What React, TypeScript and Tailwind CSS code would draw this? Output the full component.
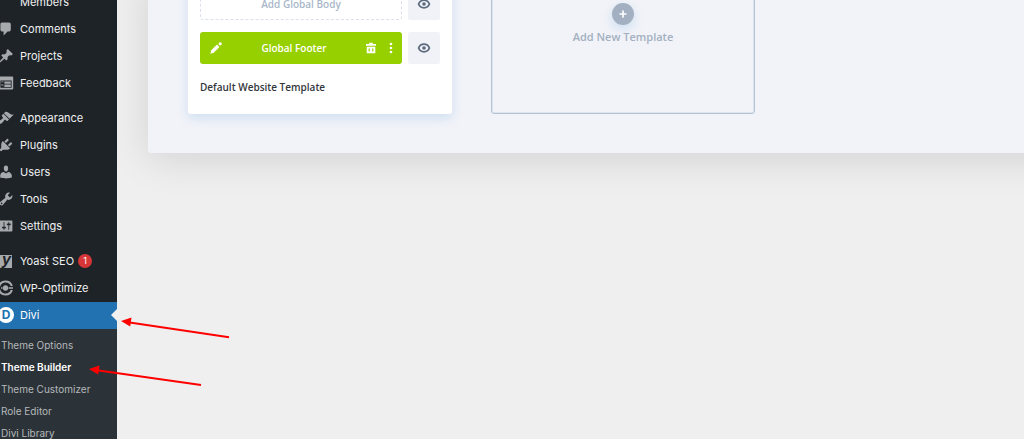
import type { ReactNode } from "react";
import { Plus } from "lucide-react";

type MenuItem = {
  label: string;
  icon?: ReactNode;
  badge?: number;
  active?: boolean;
};

function Dashicon({ d }: { d: string }) {
  return (
    <svg viewBox="0 0 20 20" className="size-4" fill="currentColor" aria-hidden="true">
      <path d={d} />
    </svg>
  );
}

function YoastIcon() {
  return (
    <svg viewBox="0 0 16 16" className="size-4 overflow-visible" aria-hidden="true">
      <path d="M1 2h13v13H1z" fill="currentColor" />
      <text x="4" y="11.5" fontSize="16" fontWeight="700" fontStyle="italic" fontFamily="Liberation Sans, sans-serif" fill="#1d2327">
        y
      </text>
    </svg>
  );
}

function OptimizeIcon() {
  return (
    <svg viewBox="0 0 16 16" className="size-4 overflow-visible" fill="none" stroke="currentColor" strokeWidth="2.2" aria-hidden="true">
      <path d="M1.2 6.3A6.600 6.600 0 0 1 13.800 6M13.800 10A6.600 6.600 0 0 1 1.200 9.700" />
      <path d="M3 8h1.500M10.500 8h4.500" strokeWidth="1.4" />
      <circle cx="7.500" cy="8" r="2.7" fill="currentColor" stroke="none" />
    </svg>
  );
}

function DiviIcon() {
  return (
    <span className="flex size-4 items-center justify-center rounded-full bg-white text-xs font-bold leading-4 text-[#2271b1]">
      D
    </span>
  );
}

const groups: MenuItem[][] = [
  [
    { label: "Members" },
    {
      label: "Comments",
      icon: <Dashicon d="M5 2h9c1.1 0 2 .9 2 2v7c0 1.1-.9 2-2 2h-2l-5 5v-5H5c-1.1 0-2-.9-2-2V4c0-1.1.9-2 2-2z" />,
    },
    {
      label: "Projects",
      icon: <Dashicon d="M10.44 3.02l1.82-1.82 6.36 6.35-1.83 1.82c-1.05-.68-2.48-.57-3.41.36l-.75.75c-.92.93-1.04 2.35-.35 3.41l-1.83 1.82-2.41-2.41-2.8 2.79c-.42.42-3.38 2.71-3.8 2.29s1.86-3.39 2.28-3.81l2.79-2.79L4.1 9.36l1.83-1.82c1.05.69 2.48.57 3.4-.36l.75-.75c.93-.92 1.05-2.35.36-3.41z" />,
    },
    {
      label: "Feedback",
      icon: <Dashicon d="M2 2h16c.55 0 1 .45 1 1v14c0 .55-.45 1-1 1H2c-.55 0-1-.45-1-1V3c0-.55.45-1 1-1zm15 14V7H3v9h14zM4 8v1h3V8H4zm4 0v3h8V8H8zm-4 4v1h3v-1H4zm4 0v3h8v-3H8z" />,
    },
  ],
  [
    {
      label: "Appearance",
      icon: <Dashicon d="M14.48 11.06L7.41 3.99l1.5-1.5c.5-.56 2.3-.47 3.51.32 1.21.8 1.43 1.28 2.91 2.1 1.18.64 2.45 1.26 4.45.85zm-.71.71L6.7 4.7 4.93 6.47c-.39.39-.39 1.02 0 1.41l1.06 1.06c.39.39.39 1.03 0 1.42-.6.6-1.43 1.11-2.21 1.69-.35.26-.7.53-1.01.84C1.43 14.23.4 16.08 1.4 17.07c.99 1 2.84-.03 4.18-1.36.31-.31.58-.66.85-1.02.57-.78 1.08-1.61 1.69-2.21.39-.39 1.02-.39 1.41 0l1.06 1.06c.39.39 1.02.39 1.41 0z" />,
    },
    {
      label: "Plugins",
      icon: <Dashicon d="M13.11 4.36L9.87 7.6 8 5.73l3.24-3.24c.35-.34 1.05-.2 1.56.32.52.51.66 1.21.31 1.55zm-8 1.77l.91-1.12 9.01 9.01-1.19.84c-.71.71-2.63 1.16-3.82 1.16H6.14L4.9 17.26c-.59.59-1.54.59-2.12 0-.59-.58-.59-1.53 0-2.12l1.24-1.24v-3.88c0-1.13.4-3.19 1.09-3.89zm7.26 3.97l3.24-3.24c.34-.35 1.04-.21 1.55.31.52.51.66 1.21.31 1.55l-3.24 3.25z" />,
    },
    {
      label: "Users",
      icon: <Dashicon d="M10 9.25c-2.27 0-2.73-3.44-2.73-3.44C7 4.02 7.82 2 9.97 2c2.16 0 2.98 2.02 2.71 3.81 0 0-.41 3.44-2.68 3.44zm0 2.57L12.72 10c2.39 0 4.52 2.33 4.52 4.53v2.49s-3.65 1.13-7.24 1.13c-3.65 0-7.24-1.13-7.24-1.13v-2.49c0-2.25 1.94-4.48 4.47-4.48z" />,
    },
    {
      label: "Tools",
      icon: <Dashicon d="M16.68 9.77c-1.34 1.34-3.3 1.67-4.95.99l-5.41 6.52c-.99.99-2.59.99-3.58 0s-.99-2.59 0-3.57l6.52-5.42c-.68-1.65-.35-3.61.99-4.95 1.28-1.28 3.12-1.62 4.72-1.06l-2.89 2.89 2.82 2.82 2.86-2.87c.53 1.58.18 3.39-1.08 4.65zM3.81 16.21c.4.39 1.04.39 1.43 0 .4-.4.4-1.04 0-1.43-.39-.4-1.03-.4-1.43 0-.39.39-.39 1.03 0 1.43z" />,
    },
    {
      label: "Settings",
      icon: <Dashicon d="M18 16V4c0-.55-.45-1-1-1H3c-.55 0-1 .45-1 1v12c0 .55.45 1 1 1h14c.55 0 1-.45 1-1zM8 11h1c.55 0 1 .45 1 1s-.45 1-1 1H8v1.5c0 .28-.22.5-.5.5s-.5-.22-.5-.5V13H6c-.55 0-1-.45-1-1s.45-1 1-1h1V5.5c0-.28.22-.5.5-.5s.5.22.5.5V11zm5-2h-1c-.55 0-1-.45-1-1s.45-1 1-1h1V5.500c0-.28.22-.5.5-.5s.5.22.5.5V7h1c.55 0 1 .45 1 1s-.45 1-1 1h-1v5.500c0 .28-.22.5-.5.5s-.5-.22-.5-.5V9z" />,
    },
  ],
  [
    { label: "Yoast SEO", icon: <YoastIcon />, badge: 1 },
    { label: "WP-Optimize", icon: <OptimizeIcon /> },
    { label: "Divi", icon: <DiviIcon />, active: true },
  ],
];

const submenu = ["Theme Options", "Theme Builder", "Theme Customizer", "Role Editor", "Divi Library"];

function Sidebar() {
  return (
    <nav className="h-screen w-[117px] shrink-0 overflow-hidden bg-[#1d2327] font-['Inter',sans-serif] text-[11px] leading-4">
      <div className="-mt-[11px] flex flex-col gap-2">
        {groups.map((items) => (
          <ul key={items[0].label}>
            {items.map((item) => (
              <li key={item.label}>
                <a href="#" className={`relative flex h-[27px] items-center gap-1 pb-px ${item.active ? "bg-[#2271b1] text-white" : "text-[#f0f0f1]"}`}>
                  <span className={`-ml-0.5 mr-0.5 size-4 shrink-0 ${item.active ? "text-white" : "text-[#a7aaad]"}`}>{item.icon}</span>
                  {item.label}
                  {item.badge && (
                    <span className="flex size-3.5 items-center justify-center rounded-full bg-[#d63638] text-[9px] text-white">
                      {item.badge}
                    </span>
                  )}
                  {item.active && (
                    <svg viewBox="0 0 6 12" className="absolute right-0 h-3 w-1.5" fill="#efefef" aria-hidden="true">
                      <path d="M6 0v12L0 6z" />
                    </svg>
                  )}
                </a>
              </li>
            ))}
          </ul>
        ))}
      </div>
      <ul className="h-full bg-[#2c3338] pt-[5px] text-[10px]">
        {submenu.map((label) => (
          <li key={label}>
            <a href="#" className={`flex h-[22px] items-center pl-px ${label === "Theme Builder" ? "font-semibold text-white" : "text-[#b5b8bb]"}`}>
              {label}
            </a>
          </li>
        ))}
      </ul>
    </nav>
  );
}

function PreviewButton() {
  return (
    <button type="button" aria-label="Preview" className="flex size-8 items-center justify-center rounded-xs bg-[#f1f2f8] text-[#5c6b7e]">
      <svg viewBox="0 0 14 10" className="h-2.5 w-3.5" fill="none" stroke="currentColor" aria-hidden="true">
        <path d="M1.6 5C2.6 2.6 4.6 1.2 7 1.2S11.4 2.6 12.4 5C11.4 7.4 9.4 8.8 7 8.8S2.6 7.4 1.6 5z" strokeWidth="1.8" />
        <circle cx="7" cy="5" r="1.8" fill="currentColor" stroke="none" />
      </svg>
    </button>
  );
}

function TemplateCard() {
  return (
    <section className="w-[264px] rounded-[3px] bg-white px-3 pt-3 pb-[18px] text-[10px] shadow-[0_4px_12px_rgba(43,135,218,0.18)]">
      <div className="flex flex-col gap-3">
        <div className="flex justify-between">
          <button type="button" className="h-8 w-[202px] rounded-[3px] border border-dashed border-[#dbe0ea] text-[#a9b7c9]">
            Add Global Body
          </button>
          <PreviewButton />
        </div>
        <div className="flex justify-between">
          <div className="flex h-8 w-[202px] items-center rounded-[3px] bg-[#97d000] pr-2 pl-2.5 text-white">
            <button type="button" aria-label="Edit">
              <svg viewBox="0 0 12 12" className="size-3" fill="currentColor" aria-hidden="true">
                <path d="M.3 11.7l1-3.4L7 2.600l2.400 2.400-5.700 5.700z" />
                <circle cx="10.200" cy="1.800" r="1.600" />
              </svg>
            </button>
            <span className="flex-1 text-center">Global Footer</span>
            <span className="flex items-center gap-3">
              <button type="button" aria-label="Delete">
                <svg viewBox="0 0 10 12" className="h-3 w-2.5" fill="currentColor" aria-hidden="true">
                  <path d="M3.200.8h3.600v1.200H10v1.800H0V2h3.200zM.7 4.800h8.600v6.400H.7zM2.600 6.600v3h1.200v-3zM6.200 6.600v3h1.200v-3z" fillRule="evenodd" />
                </svg>
              </button>
              <button type="button" aria-label="More options">
                <svg viewBox="0 0 6 12" className="h-3 w-1.5" fill="currentColor" aria-hidden="true">
                  <circle cx="3" cy="2" r="1.3" />
                  <circle cx="3" cy="6" r="1.3" />
                  <circle cx="3" cy="10" r="1.3" />
                </svg>
              </button>
            </span>
          </div>
          <PreviewButton />
        </div>
      </div>
      <h2 className="mt-3.5 leading-[18px] text-[#32373c]">Default Website Template</h2>
    </section>
  );
}

function ThemeBuilder() {
  return (
    <main className="min-w-0 flex-1 pl-[31px]">
      <div className="-mt-6 -mr-16 flex gap-[39px] rounded-bl-[3px] bg-[#f2f3f8] pb-[39px] pl-10 font-['Open_Sans',sans-serif] text-[11px] leading-4 font-semibold shadow-[0_6px_40px_rgba(0,0,0,0.12)]">
        <TemplateCard />
        <button type="button" className="flex w-[264px] flex-col items-center gap-1 rounded-[3px] border border-[#b4c3d3] pt-[26px] text-[#a2b0c1] inset-shadow-[0_0_0_1px_#dde4ee]">
          <span className="flex size-[22px] items-center justify-center rounded-full bg-[#a2b0c1] text-white shadow-[0_4px_12px_rgba(43,135,218,0.2)]">
            <Plus size={10} strokeWidth={4} />
          </span>
          Add New Template
        </button>
      </div>
    </main>
  );
}

// Pointers drawn over the page, towards the Divi and Theme Builder entries
function Arrows() {
  return (
    <svg viewBox="0 0 140 70" className="pointer-events-none absolute top-[318px] left-[89px] h-[70px] w-[140px] overflow-visible" fill="#ff0000" stroke="#ff0000" aria-hidden="true">
      <path d="M39 4.2L140 19.2M8 52.2L112 67" strokeWidth="2" />
      <path d="M32 3l10.5-3.5-1.3 9zM0 51l10.5-3.5-1.3 9z" stroke="none" />
    </svg>
  );
}

export default function App() {
  return (
    <div className="relative flex h-screen overflow-hidden bg-[#efefef]">
      <Sidebar />
      <ThemeBuilder />
      <Arrows />
    </div>
  );
}
